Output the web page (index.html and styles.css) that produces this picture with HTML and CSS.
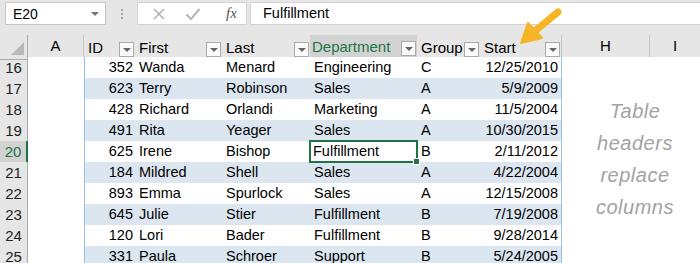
FILE: index.html
```html
<!DOCTYPE html>
<html lang="en">
<head>
    <meta charset="UTF-8">
    <title>Table headers replace columns</title>
    <link rel="stylesheet" href="styles.css">
</head>
<body>
    <header class="formula-bar">
        <div class="name-box">
            <span>E20</span>
            <span class="caret"></span>
        </div>
        <div class="grip"><i></i><i></i><i></i></div>
        <div class="fx-buttons">
            <svg width="14" height="14" viewBox="0 0 14 14"><path d="M2 2 L12 12 M12 2 L2 12" stroke="#b4b4b4" stroke-width="1.6" fill="none"/></svg>
            <svg width="16" height="14" viewBox="0 0 16 14"><path d="M1.5 7.5 L6 12 L14.5 2" stroke="#b4b4b4" stroke-width="2" fill="none"/></svg>
            <span class="fx">fx</span>
        </div>
        <div class="formula-input">Fulfillment</div>
    </header>

    <main class="sheet">
        <div class="row head">
            <div class="rh corner"><span class="tri"></span></div>
            <div class="ch sep">A</div>
            <div class="th">ID<span class="dd"></span></div>
            <div class="th">First<span class="dd"></span></div>
            <div class="th">Last<span class="dd"></span></div>
            <div class="th active">Department<span class="dd"></span></div>
            <div class="th">Group<span class="dd"></span></div>
            <div class="th sep">Start<span class="dd"></span></div>
            <div class="ch sep">H</div>
            <div class="ch">I</div>
        </div>

        <div class="row">
            <div class="rh">16</div><div class="c"></div>
            <div class="t id">352</div><div class="t">Wanda</div><div class="t">Menard</div><div class="t">Engineering</div><div class="t">C</div><div class="t date">12/25/2010</div>
            <div class="c"></div><div class="c"></div>
        </div>
        <div class="row band">
            <div class="rh">17</div><div class="c"></div>
            <div class="t id">623</div><div class="t">Terry</div><div class="t">Robinson</div><div class="t">Sales</div><div class="t">A</div><div class="t date">5/9/2009</div>
            <div class="c"></div><div class="c"></div>
        </div>
        <div class="row">
            <div class="rh">18</div><div class="c"></div>
            <div class="t id">428</div><div class="t">Richard</div><div class="t">Orlandi</div><div class="t">Marketing</div><div class="t">A</div><div class="t date">11/5/2004</div>
            <div class="c"></div><div class="c"></div>
        </div>
        <div class="row band">
            <div class="rh">19</div><div class="c"></div>
            <div class="t id">491</div><div class="t">Rita</div><div class="t">Yeager</div><div class="t">Sales</div><div class="t">A</div><div class="t date">10/30/2015</div>
            <div class="c"></div><div class="c"></div>
        </div>
        <div class="row">
            <div class="rh active">20</div><div class="c"></div>
            <div class="t id">625</div><div class="t">Irene</div><div class="t">Bishop</div><div class="t selected">Fulfillment</div><div class="t">B</div><div class="t date">2/11/2012</div>
            <div class="c"></div><div class="c"></div>
        </div>
        <div class="row band">
            <div class="rh">21</div><div class="c"></div>
            <div class="t id">184</div><div class="t">Mildred</div><div class="t">Shell</div><div class="t">Sales</div><div class="t">A</div><div class="t date">4/22/2004</div>
            <div class="c"></div><div class="c"></div>
        </div>
        <div class="row">
            <div class="rh">22</div><div class="c"></div>
            <div class="t id">893</div><div class="t">Emma</div><div class="t">Spurlock</div><div class="t">Sales</div><div class="t">A</div><div class="t date">12/15/2008</div>
            <div class="c"></div><div class="c"></div>
        </div>
        <div class="row band">
            <div class="rh">23</div><div class="c"></div>
            <div class="t id">645</div><div class="t">Julie</div><div class="t">Stier</div><div class="t">Fulfillment</div><div class="t">B</div><div class="t date">7/19/2008</div>
            <div class="c"></div><div class="c"></div>
        </div>
        <div class="row">
            <div class="rh">24</div><div class="c"></div>
            <div class="t id">120</div><div class="t">Lori</div><div class="t">Bader</div><div class="t">Fulfillment</div><div class="t">B</div><div class="t date">9/28/2014</div>
            <div class="c"></div><div class="c"></div>
        </div>
        <div class="row band">
            <div class="rh">25</div><div class="c"></div>
            <div class="t id">331</div><div class="t">Paula</div><div class="t">Schroer</div><div class="t">Support</div><div class="t">B</div><div class="t date">5/24/2005</div>
            <div class="c"></div><div class="c"></div>
        </div>

        <div class="note">Table<br>headers<br>replace<br>columns</div>
    </main>

    <svg class="arrow" width="60" height="50" viewBox="0 0 60 50">
        <path d="M48 8 L25 27" stroke="#f5b526" stroke-width="7" stroke-linecap="round" fill="none"/>
        <polygon points="11,39 18,19 32,34" fill="#f5b526" stroke="#f5b526" stroke-width="2" stroke-linejoin="round"/>
    </svg>
</body>
</html>
```

FILE: styles.css
```css
body {
    margin: 0;
    font-family: "Liberation Sans", Arial, sans-serif;
    font-size: 14.5px;
    color: #000;
    background-color: #e6e6e6;
    overflow: hidden;
    position: relative;
}

.formula-bar {
    height: 35px;
    display: flex;
    align-items: flex-start;
    padding-top: 2px;
    box-sizing: border-box;
}

.name-box {
    margin-left: 5px;
    width: 101px;
    height: 23px;
    box-sizing: border-box;
    background-color: #fff;
    border: 1px solid #c6c6c6;
    display: flex;
    align-items: center;
    justify-content: space-between;
    padding: 0 6px 0 7px;
    font-size: 14px;
}

.caret {
    width: 0;
    height: 0;
    border-left: 4px solid transparent;
    border-right: 4px solid transparent;
    border-top: 4px solid #777;
}

.grip {
    width: 31px;
    height: 23px;
    display: flex;
    flex-direction: column;
    align-items: center;
    justify-content: center;
    gap: 2px;
}

.grip i {
    width: 2px;
    height: 2px;
    background-color: #a6a6a6;
}

.fx-buttons {
    width: 110px;
    height: 23px;
    box-sizing: border-box;
    background-color: #fff;
    border: 1px solid #d4d4d4;
    display: flex;
    align-items: center;
    padding-left: 14px;
    gap: 19px;
}

.fx {
    font-family: "Liberation Serif", serif;
    font-style: italic;
    font-size: 15px;
    color: #555;
    margin-left: 6px;
}

.formula-input {
    margin-left: 3px;
    flex: 1;
    height: 23px;
    box-sizing: border-box;
    background-color: #fff;
    border: 1px solid #d4d4d4;
    border-right: none;
    padding-left: 12px;
    line-height: 21px;
    font-size: 14.5px;
}

.sheet {
    position: relative;
}

.row {
    display: grid;
    grid-template-columns: 28px 56px 51px 87px 88px 107px 63px 82px 88px 1fr;
    height: 21px;
}

.row > div {
    box-sizing: border-box;
    white-space: nowrap;
    overflow: visible;
    line-height: 21px;
}

.row.head {
    height: 22px;
}

.row.head > div {
    border-bottom: 1px solid #ababab;
    background-color: #e6e6e6;
    line-height: 22px;
}

.rh {
    background-color: #e6e6e6;
    border-right: 1px solid #ababab;
    border-bottom: 1px solid #d0d0d0;
    text-align: center;
    font-size: 15px;
    color: #222;
}

.rh.active {
    background-color: #d2d2d2;
    color: #217346;
    border-right: 2px solid #217346;
}

.corner {
    position: relative;
}

.tri {
    position: absolute;
    right: 3px;
    bottom: 4px;
    width: 0;
    height: 0;
    border-left: 13px solid transparent;
    border-bottom: 13px solid #b8b8b8;
}

.ch {
    text-align: center;
    font-size: 15px;
}

.sep {
    border-right: 1px solid #c8c8c8;
}

.th {
    display: flex;
    align-items: center;
    justify-content: space-between;
    padding: 1px 1px 0 4px;
    font-size: 15px;
}

.th.active {
    background-color: #d2d2d2 !important;
    color: #217346;
    border-bottom: 2px solid #217346 !important;
    padding-left: 2px;
}

.dd {
    width: 15px;
    height: 15px;
    box-sizing: border-box;
    border: 1px solid #ababab;
    background-color: #fafafa;
    margin-top: 3px;
    position: relative;
}

.dd::after {
    content: "";
    position: absolute;
    left: 3px;
    top: 5px;
    border-left: 4px solid transparent;
    border-right: 4px solid transparent;
    border-top: 4px solid #666;
}

.c {
    background-color: #fff;
}

.t {
    background-color: #fff;
    border-bottom: 1px solid #9bc2e6;
    padding-left: 4px;
}

.band .t {
    background-color: #dce6f1;
}

.t.id {
    border-left: 1px solid #9bc2e6;
    text-align: right;
    padding-right: 2px;
}

.t.date {
    border-right: 1px solid #9bc2e6;
    text-align: right;
    padding-right: 3px;
}

.t.selected {
    position: relative;
    padding-left: 3px;
}

.t.selected::before {
    content: "";
    position: absolute;
    left: -1px;
    top: -1px;
    right: -1px;
    bottom: -1px;
    border: 2px solid #217346;
}

.t.selected::after {
    content: "";
    position: absolute;
    right: -3px;
    bottom: -3px;
    width: 5px;
    height: 5px;
    background-color: #217346;
    border: 1px solid #fff;
}

.note {
    position: absolute;
    left: 585px;
    top: 60px;
    width: 100px;
    text-align: center;
    font-style: italic;
    font-size: 20px;
    line-height: 32px;
    color: #a3a3a3;
    letter-spacing: 0.5px;
}

.arrow {
    position: absolute;
    left: 510px;
    top: 4px;
}
```
